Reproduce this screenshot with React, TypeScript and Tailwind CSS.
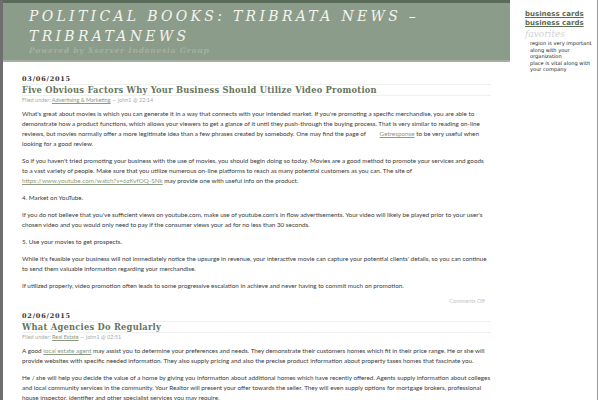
const serif = { fontFamily: '"DejaVu Serif", serif' };
const sans = { fontFamily: '"DejaVu Sans", sans-serif' };

function PostHeader({ date, title, category, time }: { date: string; title: string; category: string; time: string }) {
  return (
    <div>
      <div className="text-[6.5px] font-bold tracking-[0.8px] text-[#333] leading-[10px]" style={serif}>{date}</div>
      <h2 className="text-[8.3px] font-bold tracking-[0.25px] text-[#66755c] leading-[10px] border-y border-[#f0f0f0]" style={serif}>
        {title}
      </h2>
      <div className="text-[5.5px] text-[#aaa] leading-[8px]">
        Filed under: <span className="underline text-[#8b9a80]">{category}</span> — john1 @ {time}
      </div>
    </div>
  );
}

export default function App() {
  return (
    <div className="w-[600px] h-[400px] overflow-hidden bg-white flex border-l-[3px] border-[#6e6e6e]" style={{ fontFamily: 'Lato, "Open Sans", sans-serif' }}>
      <div className="w-[507px] shrink-0">
        <div className="h-[62px] bg-[#8c9c8a] border-t-[3px] border-[#5b6b59] border-b-2 border-b-[#a4b0a0] px-[26px] pt-[3px]">
          <h1 className="text-[14px] italic tracking-[3.3px] leading-[20px] text-[#f4f4ee]" style={serif}>
            POLITICAL BOOKS: TRIBRATA NEWS – TRIBRATANEWS
          </h1>
          <div className="text-[7.5px] italic font-bold tracking-[0.75px] text-[#a3b19f] leading-[10px]" style={serif}>
            Powered by Xserver Indonesia Group
          </div>
        </div>
        <div className="px-[19px] pt-[12px] text-[6.3px] leading-[10px] text-[#3a3a3a]">
          <PostHeader date="03/06/2015" title="Five Obvious Factors Why Your Business Should Utilize Video Promotion" category="Advertising & Marketing" time="22:14" />
          <div className="mt-[5px] flex flex-col gap-[7px]">
            <p>
              What's great about movies is which you can generate it in a way that connects with your intended market. If you're promoting a specific merchandise, you are able to demonstrate how a product functions, which allows your viewers to get a glance of it until they push-through the buying process. That is very similar to reading on-line reviews, but movies normally offer a more legitimate idea than a few phrases created by somebody. One may find the page of{' '}
              <span className="ml-[12px] underline text-[#8b9a80]">Getresponse</span> to be very useful when looking for a good review.
            </p>
            <p>
              So if you haven't tried promoting your business with the use of movies, you should begin doing so today. Movies are a good method to promote your services and goods to a vast variety of people. Make sure that you utilize numerous on-line platforms to reach as many potential customers as you can. The site of{' '}
              <span className="underline text-[#8b9a80]">https://www.youtube.com/watch?v=6zKvfOQ-SNk</span> may provide one with useful info on the product.
            </p>
            <p>4. Market on YouTube.</p>
            <p>
              If you do not believe that you've sufficient views on youtube.com, make use of youtube.com's in flow advertisements. Your video will likely be played prior to your user's chosen video and you would only need to pay if the consumer views your ad for no less than 30 seconds.
            </p>
            <p>5. Use your movies to get prospects.</p>
            <p>
              While it's feasible your business will not immediately notice the upsurge in revenue, your interactive movie can capture your potential clients' details, so you can continue to send them valuable information regarding your merchandise.
            </p>
            <p>If utilized properly, video promotion often leads to some progressive escalation in achieve and never having to commit much on promotion.</p>
          </div>
          <div className="text-right text-[#c4c4c4] text-[5.5px] leading-[8px] mt-[6px] pr-[6px]">Comments Off</div>
          <div className="mt-[6px]">
            <PostHeader date="02/06/2015" title="What Agencies Do Regularly" category="Real Estate" time="02:51" />
          </div>
          <div className="mt-[5px] flex flex-col gap-[7px]">
            <p>
              A good <span className="underline text-[#8b9a80]">local estate agent</span> may assist you to determine your preferences and needs. They demonstrate their customers homes which fit in their price range. He or she will provide websites with specific needed information. They also supply pricing and also the precise product information about property taxes homes that fascinate you.
            </p>
            <p>
              He / she will help you decide the value of a home by giving you information about additional homes which have recently offered. Agents supply information about colleges and local community services in the community. Your Realtor will present your offer towards the seller. They will even supply options for mortgage brokers, professional house inspector, identifier and other specialist services you may require.
            </p>
          </div>
        </div>
      </div>
      <div className="flex-1 border-r border-[#9a9a9a] pl-[15px] pt-[10px] mr-[2px]">
        <div className="text-[7px] font-bold underline text-[#5d6b4f] leading-[9px]" style={sans}>
          <div>business cards</div>
          <div>business cards</div>
        </div>
        <div className="text-[9px] italic text-[#d2d2d2] leading-[11px] mt-[1px]" style={serif}>favorites</div>
        <div className="pl-[5px] pr-[4px] text-[5.1px] leading-[6.5px] text-[#222]" style={sans}>
          <div>region is very important along with your organization</div>
          <div>place is vital along with your company</div>
        </div>
      </div>
    </div>
  );
}
